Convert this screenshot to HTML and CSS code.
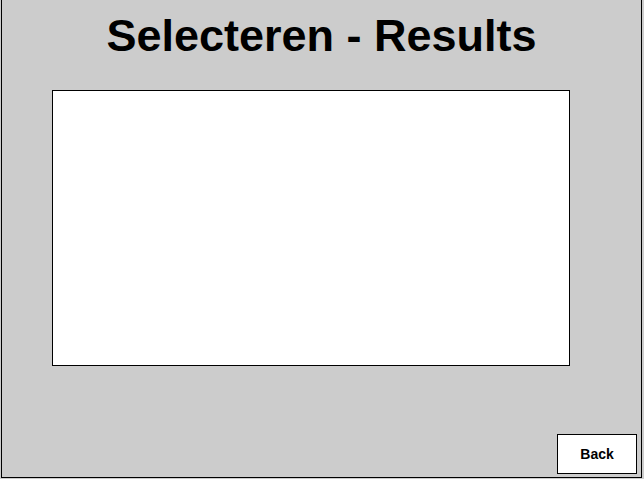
FILE: index.html
```html
<!DOCTYPE html>
<html lang="nl">
<head>
<meta charset="utf-8">
<title>Selecteren - Results</title>
<link rel="stylesheet" href="styles.css">
</head>
<body>
<div class="frame">
  <h1 class="title">Selecteren - Results</h1>
  <div class="results"></div>
  <div class="actions">
    <button class="back-btn" type="button">Back</button>
  </div>
</div>
</body>
</html>
```

FILE: styles.css
```css
html, body {
  margin: 0;
  padding: 0;
  background: #cccccc;
}
body {
  font-family: "Liberation Sans", Arial, sans-serif;
  width: 644px;
  height: 479px;
  overflow: hidden;
}
.frame {
  box-sizing: border-box;
  margin-left: 1px;
  width: 641px;
  height: 478px;
  border-left: 1px solid #000;
  border-right: 1px solid #000;
  border-bottom: 1px solid #000;
  display: flex;
  flex-direction: column;
}
.title {
  margin: 0;
  padding-top: 11px;
  height: 50px;
  font-size: 45px;
  line-height: 50px;
  font-weight: bold;
  text-align: center;
  color: #000;
}
.results {
  box-sizing: border-box;
  margin-top: 29px;
  margin-left: 50px;
  width: 518px;
  height: 276px;
  background: #fff;
  border: 1px solid #000;
}
.actions {
  margin-top: auto;
  display: flex;
  justify-content: flex-end;
  padding-right: 4px;
  padding-bottom: 3px;
}
.back-btn {
  box-sizing: border-box;
  width: 80px;
  height: 40px;
  background: #fff;
  border: 1px solid #000;
  border-radius: 0;
  padding: 0;
  font-family: "Liberation Sans", Arial, sans-serif;
  font-size: 14px;
  font-weight: bold;
  color: #000;
}
```
